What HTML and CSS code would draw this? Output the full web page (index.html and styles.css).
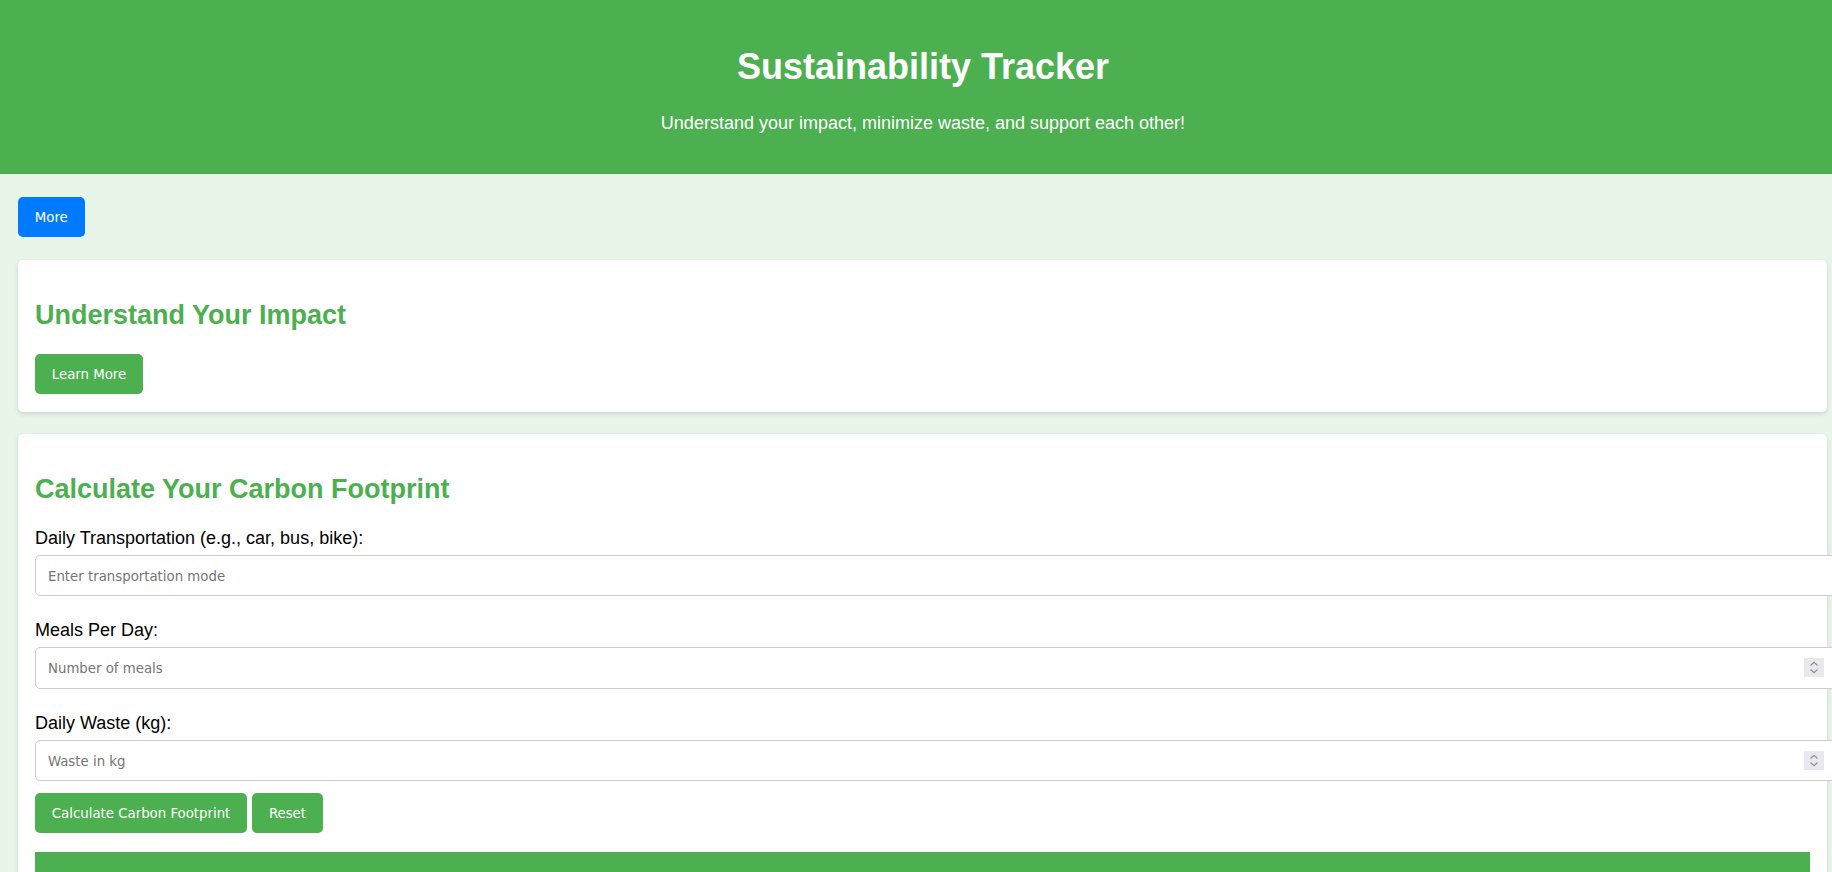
FILE: index.html
```html
<!DOCTYPE html>
<html lang="en">
<head>
<meta charset="utf-8">
<title>Sustainability Tracker</title>
<link rel="stylesheet" href="styles.css">
</head>
<body>
<header class="site-header">
  <h1 class="site-title">Sustainability Tracker</h1>
  <p class="site-tagline">Understand your impact, minimize waste, and support each other!</p>
</header>
<main class="page">
  <div class="toolbar"><button type="button" class="btn btn-blue">More</button></div>
  <section class="card">
    <h2 class="card-title">Understand Your Impact</h2>
    <button type="button" class="btn btn-green">Learn More</button>
  </section>
  <section class="card">
    <h2 class="card-title">Calculate Your Carbon Footprint</h2>
    <form class="calc-form">
      <div class="field">
        <label class="field-label" for="transport">Daily Transportation (e.g., car, bus, bike):</label>
        <div class="input-wrap">
          <input class="field-input" id="transport" type="text" placeholder="Enter transportation mode">
        </div>
      </div>
      <div class="field">
        <label class="field-label" for="meals">Meals Per Day:</label>
        <div class="input-wrap">
          <input class="field-input" id="meals" type="number" placeholder="Number of meals">
          <span class="spinner" aria-hidden="true"><svg width="20" height="19" viewBox="0 0 20 19"><rect width="20" height="19" fill="#e9e9ed"/><path d="M6.5 7.5 L10 4.3 L13.5 7.5" fill="none" stroke="#8f8f9d" stroke-width="1.2"/><path d="M6.5 11.5 L10 14.7 L13.5 11.5" fill="none" stroke="#8f8f9d" stroke-width="1.2"/></svg></span>
        </div>
      </div>
      <div class="field field-last">
        <label class="field-label" for="waste">Daily Waste (kg):</label>
        <div class="input-wrap">
          <input class="field-input" id="waste" type="number" placeholder="Waste in kg">
          <span class="spinner" aria-hidden="true"><svg width="20" height="19" viewBox="0 0 20 19"><rect width="20" height="19" fill="#e9e9ed"/><path d="M6.5 7.5 L10 4.3 L13.5 7.5" fill="none" stroke="#8f8f9d" stroke-width="1.2"/><path d="M6.5 11.5 L10 14.7 L13.5 11.5" fill="none" stroke="#8f8f9d" stroke-width="1.2"/></svg></span>
        </div>
      </div>
      <div class="btn-row">
        <button type="button" class="btn btn-green">Calculate Carbon Footprint</button>
        <button type="reset" class="btn btn-green">Reset</button>
      </div>
    </form>
    <div class="result"></div>
  </section>
</main>
</body>
</html>
```

FILE: styles.css
```css
html {
  overflow-x: hidden;
}

body {
  margin: 0;
  background: #e8f5e9;
  font-family: "Liberation Sans", Arial, sans-serif;
  color: #000;
}

.site-header {
  background: #4caf50;
  color: #fff;
  text-align: center;
  padding: 45.5px 20px 40px 34px;
}

.site-title {
  margin: 0 0 25.5px;
  font-size: 36px;
  font-weight: bold;
  line-height: normal;
}

.site-tagline {
  margin: 0;
  font-size: 18px;
  line-height: normal;
}

.page {
  padding: 23px 5px 0 18px;
}

.toolbar {
  margin-bottom: 23px;
}

.btn {
  font-family: "DejaVu Sans Condensed", "DejaVu Sans", sans-serif;
  font-stretch: condensed;
  font-size: 14.8px;
  line-height: 18px;
  color: #fff;
  border: none;
  border-radius: 5px;
  padding: 11px 16.8px;
  cursor: pointer;
}

.btn-blue {
  background: #007bff;
}

.btn-green {
  background: #4caf50;
}

.card {
  background: #fff;
  border-radius: 5px;
  box-shadow: 0 2px 5px rgba(0, 0, 0, 0.12);
  padding: 18px 17px;
  margin-bottom: 22px;
}

.card-title {
  color: #4caf50;
  font-size: 27px;
  font-weight: bold;
  line-height: normal;
  margin: 22.4px 0;
}

.field {
  margin-bottom: 24px;
}

.field-last {
  margin-bottom: 12.4px;
}

.field-label {
  display: block;
  font-size: 18px;
  line-height: normal;
  margin-bottom: 6px;
}

.input-wrap {
  position: relative;
}

.field-input {
  display: block;
  box-sizing: content-box;
  width: 100%;
  height: 39.5px;
  padding: 0 12px;
  border: 1px solid #ccc;
  border-radius: 5px;
  font-family: "DejaVu Sans Condensed", "DejaVu Sans", sans-serif;
  font-stretch: condensed;
  font-size: 14.8px;
  color: #000;
  background: #fff;
  -moz-appearance: textfield;
}

.field-input::-webkit-outer-spin-button,
.field-input::-webkit-inner-spin-button {
  -webkit-appearance: none;
  margin: 0;
}

.field-input::placeholder {
  color: #757575;
}

.spinner {
  position: absolute;
  right: -14px;
  top: 11px;
  width: 20px;
  height: 19px;
  line-height: 0;
}

.btn-row {
  display: flex;
  gap: 5px;
}

.result {
  margin-top: 19px;
  height: 80px;
  background: #4caf50;
}
```
